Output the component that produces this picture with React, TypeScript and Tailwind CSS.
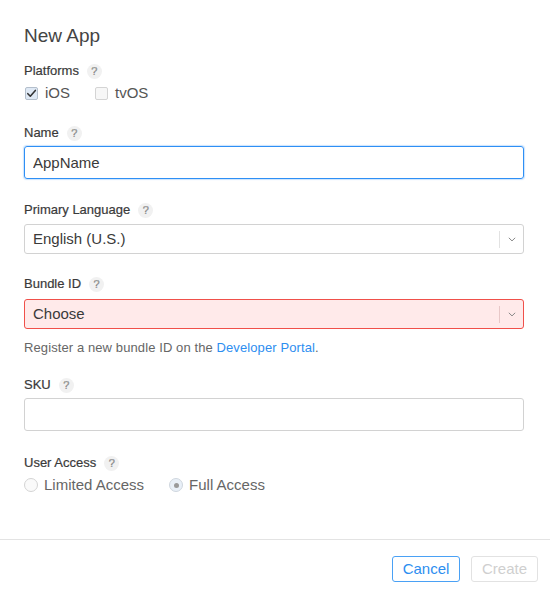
import React, { useState } from 'react';

function Help() {
  return (
    <span className="ml-2 inline-flex h-[15px] w-[15px] items-center justify-center rounded-full bg-[#f1f1f1] text-[11px] leading-none text-[#aaa]">
      ?
    </span>
  );
}

function Label({ children }: { children: React.ReactNode }) {
  return (
    <div className="flex h-4 items-center text-[13px] leading-4 text-[#3a3a3a] [-webkit-text-stroke:0.2px_#3a3a3a]">
      {children}
      <Help />
    </div>
  );
}

function Checkbox({ checked, label }: { checked: boolean; label: string }) {
  return (
    <label className="flex items-center gap-[7px] text-[15px] leading-[18px] text-[#555]">
      <span
        className={`flex h-[13px] w-[13px] items-center justify-center rounded-[2px] border ${
          checked ? 'border-[#b4bfcc] bg-[#dfe9f5]' : 'border-[#d4d4d4] bg-[#f7f7f7]'
        }`}
      >
        {checked && (
          <svg viewBox="0 0 12 12" className="h-[11px] w-[11px]">
            <path d="M2 6.2 L4.7 9 L10.2 2.6" fill="none" stroke="#333" strokeWidth="1.7" strokeLinecap="round" strokeLinejoin="round" />
          </svg>
        )}
      </span>
      {label}
    </label>
  );
}

function Radio({ checked, label }: { checked: boolean; label: string }) {
  return (
    <label className="flex items-center gap-[6px] text-[15px] leading-[18px] text-[#666]">
      <span
        className={`flex h-[14px] w-[14px] items-center justify-center rounded-full border ${
          checked ? 'border-[#cfd6de] bg-[#e9f0f8]' : 'border-[#d4d4d4] bg-[#fafafa]'
        }`}
      >
        {checked && <span className="h-[5px] w-[5px] rounded-full bg-[#9a9a9a]" />}
      </span>
      {label}
    </label>
  );
}

function Select({ value, error }: { value: string; error?: boolean }) {
  return (
    <div
      className={`flex h-[30px] items-center rounded-[3px] border pl-[8px] text-[15px] text-[#3a3a3a] ${
        error ? 'border-[#f0504a] bg-[#ffeaea]' : 'border-[#d2d2d2] bg-white'
      }`}
    >
      <span className="flex-1">{value}</span>
      <span className={`h-[17px] w-px ${error ? 'bg-[#e8c8c8]' : 'bg-[#e2e2e2]'}`} />
      <span className="flex w-[23px] justify-center">
        <svg viewBox="0 0 8 5" className="h-[5px] w-[8px]">
          <path d="M0.8 0.8 L4 3.9 L7.2 0.8" fill="none" stroke="#888" strokeWidth="1" />
        </svg>
      </span>
    </div>
  );
}

export default function App() {
  const [name, setName] = useState('AppName');
  const [sku, setSku] = useState('');

  return (
    <div className="flex h-[594px] w-[550px] flex-col bg-white font-['Liberation_Sans',Arial,sans-serif]">
      <div className="flex-1 pl-6 pr-[26px] pt-[25px]">
        <h1 className="text-[19px] leading-[22px] text-[#444]">New App</h1>

        <div className="mt-[16px]">
          <Label>Platforms</Label>
        </div>
        <div className="mt-[5px] flex gap-[25px] pl-[1px]">
          <Checkbox checked label="iOS" />
          <Checkbox checked={false} label="tvOS" />
        </div>

        <div className="mt-[23px]">
          <Label>Name</Label>
        </div>
        <input
          value={name}
          onChange={(e) => setName(e.target.value)}
          className="mt-[5px] block h-[33px] w-full rounded-[3px] border-[1.5px] border-[#2e8ff5] px-[8px] text-[15px] text-[#3a3a3a] shadow-[0_0_1px_1px_rgba(46,143,245,0.25)] outline-none"
        />

        <div className="mt-[23px]">
          <Label>Primary Language</Label>
        </div>
        <div className="mt-[6px]">
          <Select value="English (U.S.)" />
        </div>

        <div className="mt-[22px]">
          <Label>Bundle ID</Label>
        </div>
        <div className="mt-[7px]">
          <Select value="Choose" error />
        </div>
        <p className="mt-[11px] text-[13px] leading-4 tracking-[0.1px] text-[#666]">
          Register a new bundle ID on the <a className="text-[#2d8ef0]">Developer Portal</a>.
        </p>

        <div className="mt-[21px]">
          <Label>SKU</Label>
        </div>
        <input
          value={sku}
          onChange={(e) => setSku(e.target.value)}
          className="mt-[5px] block h-[33px] w-full rounded-[3px] border border-[#d2d2d2] px-[8px] text-[15px] text-[#333] outline-none"
        />

        <div className="mt-[24px]">
          <Label>User Access</Label>
        </div>
        <div className="mt-[5px] flex gap-[25px]">
          <Radio checked={false} label="Limited Access" />
          <Radio checked label="Full Access" />
        </div>
      </div>

      <div className="flex justify-end gap-[11px] border-t border-[#e3e3e3] pb-[12px] pl-6 pr-[12px] pt-[16px]">
        <button className="h-[26px] w-[68px] rounded-[3px] border border-[#4aa1f5] text-[15px] text-[#2d8ef0]">
          Cancel
        </button>
        <button className="h-[26px] w-[67px] rounded-[3px] border border-[#e2e2e2] text-[15px] text-[#cfcfcf]">
          Create
        </button>
      </div>
    </div>
  );
}
